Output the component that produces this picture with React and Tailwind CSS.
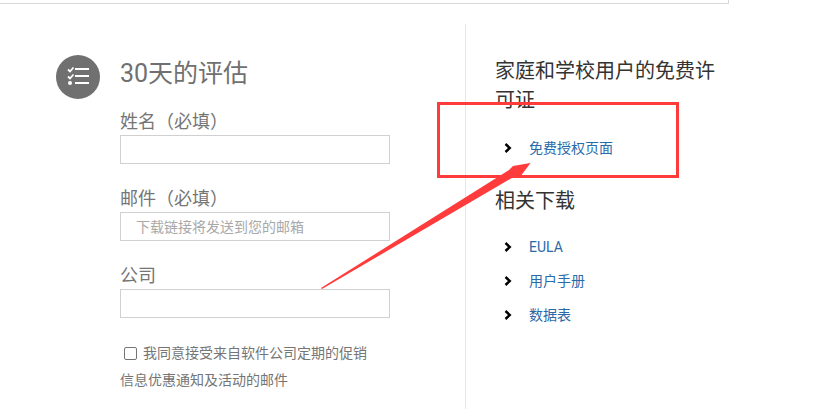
import React from 'react';

const FONT = "font-['Roboto','Noto_Sans_CJK_SC',sans-serif]";

const ChecklistIcon = () => (
  <svg width="22" height="18" viewBox="0 0 22 18" fill="none">
    <path d="M1 2.5l2 2 3.5-4M1 9.5l2 2 3.5-4" stroke="#fff" strokeWidth="1.8" />
    <circle cx="3" cy="16" r="2" fill="#fff" />
    <path d="M8 2h14M8 9h14M8 16h14" stroke="#fff" strokeWidth="2.2" />
  </svg>
);

const Chevron = () => (
  <svg width="8" height="10" viewBox="0 0 8 10" fill="none" className="shrink-0">
    <path d="M1.5 1L5.8 5L1.5 9" stroke="#000" strokeWidth="2.4" />
  </svg>
);

const Field = ({ label, placeholder, className = '' }) => (
  <div className={className}>
    <label className="block text-[18px] leading-[22px] text-[#757575]">{label}</label>
    <input
      type="text"
      placeholder={placeholder}
      className="mt-[2px] block h-[29px] w-[270px] border border-[#d0d0d0] bg-white px-[15px] text-[14px] outline-none placeholder:text-[#a8a8a8]"
    />
  </div>
);

const LinkRow = ({ children }) => (
  <li className="flex h-[34px] items-center pl-[9px]">
    <Chevron />
    <a href="#" className="ml-[17px] text-[14px] text-[#2a6aa8]">{children}</a>
  </li>
);

export default function App() {
  return (
    <div className={`relative h-[409px] w-[817px] overflow-hidden bg-white ${FONT}`}>
      <div className="h-[4px] w-[729px] border-b border-r border-[#d9d9d9]" />

      <div className="mt-[20px] flex">
        <div className="flex h-[385px] w-[466px] border-r border-[#e6e6e6] pl-[56px] pt-[31px]">
          <div className="flex h-[44px] w-[44px] shrink-0 items-center justify-center rounded-full bg-[#707070] pb-[2px]">
            <ChecklistIcon />
          </div>
          <div className="ml-[20px]">
            <h2 className="text-[25px] leading-[38px] text-[#707070]">30天的评估</h2>
            <Field label="姓名（必填）" className="mt-[18px]" />
            <Field label="邮件（必填）" placeholder="下载链接将发送到您的邮箱" className="mt-[24px]" />
            <Field label="公司" className="mt-[24px]" />
            <div className="mt-[22px] text-[14px] leading-[27px] text-[#757575]">
              <label className="flex h-[27px] items-center pl-[4px]">
                <input type="checkbox" className="h-[13px] w-[13px] appearance-none rounded-[2px] border border-[#757575] bg-white" />
                <span className="ml-[6px]">我同意接受来自软件公司定期的促销</span>
              </label>
              <div>信息优惠通知及活动的邮件</div>
            </div>
          </div>
        </div>

        <div className="w-[255px] pl-[29px] pt-[33px]">
          <h3 className="text-[20px] leading-[29px] text-[#333]">家庭和学校用户的免费许可证</h3>
          <ul className="mt-[16px]">
            <LinkRow>免费授权页面</LinkRow>
          </ul>
          <h3 className="mt-[21px] text-[20px] leading-[30px] text-[#333]">相关下载</h3>
          <ul className="mt-[14px]">
            <LinkRow>EULA</LinkRow>
            <LinkRow>用户手册</LinkRow>
            <LinkRow>数据表</LinkRow>
          </ul>
        </div>
      </div>

      {/* screenshot annotation on top of the page */}
      <div className="absolute left-[437px] top-[102px] h-[76px] w-[242px] border-[3px] border-[#ff3b3b]" />
      <svg className="absolute left-0 top-0" width="817" height="409" viewBox="0 0 817 409" fill="none">
        <polygon points="321,288 509,170 513,166 530.5,163 520,177 517,175 322,289" fill="#ff3b3b" />
      </svg>
    </div>
  );
}
